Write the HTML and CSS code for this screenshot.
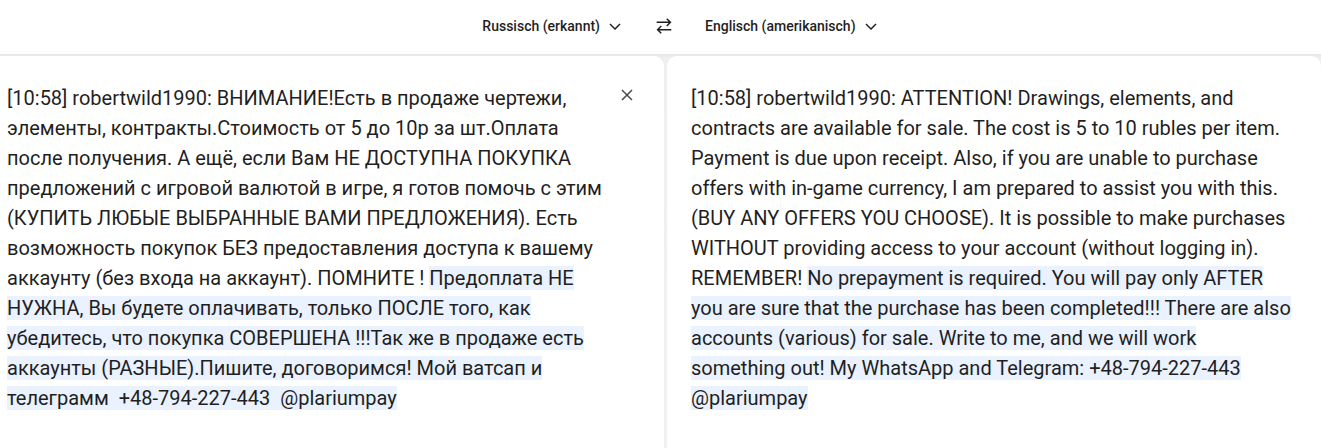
FILE: index.html
```html
<!DOCTYPE html>
<html lang="de">
<head>
<meta charset="utf-8">
<title>Übersetzer</title>
<link rel="stylesheet" href="styles.css">
</head>
<body>
<header class="langbar">
  <button class="lang lang-src">Russisch (erkannt)
    <svg class="chev" viewBox="0 0 24 24" width="20" height="20"><path d="M6 9.5l6 6 6-6" fill="none" stroke="#1f1f1f" stroke-width="1.7"/></svg>
  </button>
  <button class="swap" aria-label="Sprachen tauschen">
    <svg viewBox="0 0 24 24" width="22" height="22"><path d="M4 8h15M15 4l4 4-4 4M20 16H5M9 12l-4 4 4 4" fill="none" stroke="#1f1f1f" stroke-width="1.6"/></svg>
  </button>
  <button class="lang lang-tgt">Englisch (amerikanisch)
    <svg class="chev" viewBox="0 0 24 24" width="20" height="20"><path d="M6 9.5l6 6 6-6" fill="none" stroke="#1f1f1f" stroke-width="1.7"/></svg>
  </button>
</header>
<main class="panes">
  <section class="pane pane-src">
    <p class="text">[10:58] robertwild1990: ВНИМАНИЕ!Есть в продаже чертежи,<br>элементы, контракты.Стоимость от 5 до 10р за шт.Оплата<br>после получения. А ещё, если Вам НЕ ДОСТУПНА ПОКУПКА<br>предложений с игровой валютой в игре, я готов помочь с этим<br>(КУПИТЬ ЛЮБЫЕ ВЫБРАННЫЕ ВАМИ ПРЕДЛОЖЕНИЯ). Есть<br>возможность покупок БЕЗ предоставления доступа к вашему<br>аккаунту (без входа на аккаунт). ПОМНИТЕ ! <span class="hl">Предоплата НЕ <br>НУЖНА, Вы будете оплачивать, только ПОСЛЕ того, как <br>убедитесь, что покупка СОВЕРШЕНА !!!Так же в продаже есть <br>аккаунты (РАЗНЫЕ).Пишите, договоримся! Мой ватсап и <br>телеграмм&nbsp; +48-794-227-443&nbsp; @plariumpay</span></p>
    <button class="close" aria-label="Text löschen">
      <svg viewBox="0 0 24 24" width="24" height="24"><path d="M6 6l12 12M18 6L6 18" fill="none" stroke="#444746" stroke-width="1.7"/></svg>
    </button>
  </section>
  <section class="pane pane-tgt">
    <p class="text">[10:58] robertwild1990: ATTENTION! Drawings, elements, and<br>contracts are available for sale. The cost is 5 to 10 rubles per item.<br>Payment is due upon receipt. Also, if you are unable to purchase<br>offers with in-game currency, I am prepared to assist you with this.<br>(BUY ANY OFFERS YOU CHOOSE). It is possible to make purchases<br>WITHOUT providing access to your account (without logging in).<br>REMEMBER! <span class="hl">No prepayment is required. You will pay only AFTER <br>you are sure that the purchase has been completed!!! There are also <br>accounts (various) for sale. Write to me, and we will work <br>something out! My WhatsApp and Telegram: +48-794-227-443 <br>@plariumpay</span></p>
  </section>
</main>
</body>
</html>
```
FILE: styles.css
```css
* { box-sizing: border-box; }
html, body { margin: 0; padding: 0; }
body {
  width: 1321px;
  height: 448px;
  overflow: hidden;
  background: #fff;
  font-family: Roboto, "Noto Sans", Arial, sans-serif;
  color: #1f1f1f;
}
button {
  font: inherit;
  color: inherit;
  background: none;
  border: 0;
  padding: 0;
  cursor: pointer;
}
.langbar {
  height: 54px;
  display: grid;
  grid-template-columns: 1fr 48px 1fr;
  align-items: center;
  padding: 0 0 2px 7px;
  background: #fff;
  position: relative;
  z-index: 1;
}
.lang {
  display: flex;
  align-items: center;
  gap: 5px;
  font-size: 14px;
  font-weight: 500;
  letter-spacing: 0;
  height: 36px;
}
.lang-src { justify-self: end; margin-right: 15px; }
.lang-tgt { justify-self: start; margin-left: 17px; }
.chev { display: block; }
.swap {
  width: 48px;
  height: 40px;
  display: flex;
  align-items: center;
  justify-content: center;
}
.panes {
  display: grid;
  grid-template-columns: 664px 1fr;
  gap: 3px;
  background: linear-gradient(#e6e6e6, #efefef 4px, #f1f1f1);
  padding-top: 2px;
  height: 394px;
}
.pane {
  background: #fff;
  border-radius: 10px 10px 0 0;
  position: relative;
}
.pane-src { border-top-left-radius: 0; padding: 27px 0 0 7px; }
.pane-tgt { padding: 27px 10px 0 24px; }
.text {
  margin: 0;
  font-size: 20px;
  line-height: 30px;
  letter-spacing: 0;
}
.hl {
  background: #e9f2fe;
}
.close {
  position: absolute;
  top: 27px;
  right: 25px;
  width: 24px;
  height: 24px;
  display: flex;
  align-items: center;
  justify-content: center;
}
.close svg { width: 20px; height: 20px; }
```
